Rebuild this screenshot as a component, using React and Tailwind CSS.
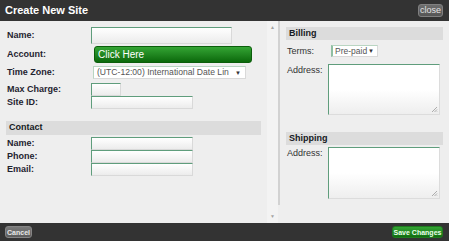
import React from "react";

const field =
    "border border-t-[#5f9d7c] border-l-[#5f9d7c] border-r-[#d9d9d9] border-b-[#d9d9d9] bg-linear-to-b from-white to-[#ececec]";

const area =
    "relative border border-t-[#5f9d7c] border-l-[#5f9d7c] border-r-[#dcdcdc] border-b-[#dcdcdc] bg-linear-to-b from-white via-white to-[#eeeeee]";

function Grip() {
    return (
        <svg
            width="7"
            height="7"
            viewBox="0 0 7 7"
            className="absolute right-[1px] bottom-[1px]"
        >
            <path d="M6 1 L1 6 M6 3.5 L3.5 6 M6 5.5 L5.5 6" stroke="#9a9a9a" strokeWidth="0.8" />
        </svg>
    );
}

function Arrow() {
    return <span className="shrink-0 text-[6px] text-[#333] leading-none">▼</span>;
}

function Row({ label, className = "", children }) {
    return (
        <div className={`flex items-center ${className}`}>
            <div className="w-[85px] pl-[1px] text-[9px] font-bold text-[#1f2330] leading-none">
                {label}
            </div>
            {children}
        </div>
    );
}

function SectionHead({ children, className = "" }) {
    return (
        <div
            className={`h-[13px] bg-[#dcdcdc] flex items-center pl-[3px] text-[9px] font-bold text-[#151822] ${className}`}
        >
            {children}
        </div>
    );
}

export default function App() {
    return (
        <div className="w-[449px] h-[241px] flex flex-col bg-[#eeeeee] font-['Liberation_Sans',Arial,sans-serif] overflow-hidden">
            {/* Header */}
            <div className="h-[21px] bg-[#333333] flex items-center justify-between pl-[5px] pr-[6px]">
                <span className="text-[11px] font-bold text-white">Create New Site</span>
                <button className="h-[13px] w-[25px] rounded-[3px] border border-[#808080] bg-linear-to-b from-[#6e6e6e] to-[#555555] text-[9px] leading-none text-[#e4e4e4] flex items-center justify-center">
                    close
                </button>
            </div>

            {/* Body */}
            <div className="flex-1 flex">
                {/* Left form */}
                <div className="w-[267px] pl-[6px] pr-[6px] flex flex-col">
                    <Row label="Name:" className="mt-[6px] h-[17px]">
                        <input className={`w-[141px] h-[17px] ${field}`} />
                    </Row>
                    <Row label="Account:" className="mt-[2px] h-[17px]">
                        <button className="ml-[3px] w-[158px] h-[17px] rounded-[3px] border border-[#0b5e0b] bg-linear-to-b from-[#34a534] to-[#0a690a] text-[10px] text-white text-left pl-[3px]">
                            Click Here
                        </button>
                    </Row>
                    <Row label="Time Zone:" className="mt-[3px] h-[13px]">
                        <div className="ml-[2px] w-[153px] h-[13px] border border-t-[#b9d5c2] border-l-[#b9d5c2] border-r-[#d9d9d9] border-b-[#d9d9d9] bg-white flex items-center pl-[3px] pr-[4px]">
                            <span className="flex-1 min-w-0 mr-[3px] text-[8.6px] text-[#555555] leading-none whitespace-nowrap overflow-hidden">
                                (UTC-12:00) International Date Lin
                            </span>
                            <Arrow />
                        </div>
                    </Row>
                    <Row label="Max Charge:" className="mt-[4px] h-[13px]">
                        <input className={`w-[30px] h-[13px] ${field}`} />
                    </Row>
                    <Row label="Site ID:" className="h-[13px]">
                        <input className={`w-[102px] h-[13px] ${field}`} />
                    </Row>

                    <SectionHead className="mt-[12px] h-[14px]">Contact</SectionHead>
                    <Row label="Name:" className="mt-[2px] h-[13px]">
                        <input className={`w-[102px] h-[13px] ${field}`} />
                    </Row>
                    <Row label="Phone:" className="h-[13px]">
                        <input className={`w-[102px] h-[13px] ${field}`} />
                    </Row>
                    <Row label="Email:" className="h-[13px]">
                        <input className={`w-[102px] h-[13px] ${field}`} />
                    </Row>
                </div>

                {/* Scrollbar */}
                <div className="w-[11px] bg-[#f3f3f3] flex flex-col items-center justify-between pt-[4px] pb-[4px]">
                    <span className="text-[5px] text-[#a3a3a3] leading-none">▲</span>
                    <span className="text-[5px] text-[#a3a3a3] leading-none">▼</span>
                </div>

                {/* Right panel */}
                <div className="w-[171px] h-[184px] border-l-2 border-[#d2d2d2] pl-[6px] pr-[6px] flex flex-col">
                    <SectionHead className="mt-[6px] h-[12px]">Billing</SectionHead>
                    <div className="flex items-center mt-[5px] h-[12px]">
                        <div className="w-[45px] pl-[1px] text-[9px] text-[#333] leading-none">Terms:</div>
                        <div className="w-[47px] h-[12px] border border-l-2 border-t-[#b9d5c2] border-l-[#8fbfa2] border-r-[#d9d9d9] border-b-[#d9d9d9] bg-white flex items-center justify-between pl-[2px] pr-[3px]">
                            <span className="text-[8.5px] text-[#555555] leading-none whitespace-nowrap">Pre-paid</span>
                            <Arrow />
                        </div>
                    </div>
                    <div className="flex mt-[7px]">
                        <div className="w-[42px] pl-[1px] pt-[2px] text-[9px] text-[#333] leading-none">Address:</div>
                        <div className={`w-[112px] h-[51px] ${area}`}>
                            <Grip />
                        </div>
                    </div>

                    <SectionHead className="mt-[17px] h-[12px]">Shipping</SectionHead>
                    <div className="flex mt-[2px]">
                        <div className="w-[42px] pl-[1px] pt-[2px] text-[9px] text-[#333] leading-none">Address:</div>
                        <div className={`w-[112px] h-[52px] ${area}`}>
                            <Grip />
                        </div>
                    </div>
                </div>
            </div>

            {/* Footer */}
            <div className="h-[18px] bg-[#333333] flex items-center justify-between pl-[5px] pr-[6px]">
                <button className="w-[27px] h-[12px] rounded-[3px] border border-[#858585] bg-linear-to-b from-[#7a7a7a] to-[#5c5c5c] text-[7px] font-bold text-[#e8e8e8] leading-none flex items-center justify-center">
                    Cancel
                </button>
                <button className="w-[51px] h-[12px] rounded-[3px] border border-[#1f7a1f] bg-linear-to-b from-[#34a534] to-[#0f6e0f] text-[7px] font-bold text-[#eaffea] leading-none flex items-center justify-center whitespace-nowrap">
                    Save Changes
                </button>
            </div>
        </div>
    );
}
